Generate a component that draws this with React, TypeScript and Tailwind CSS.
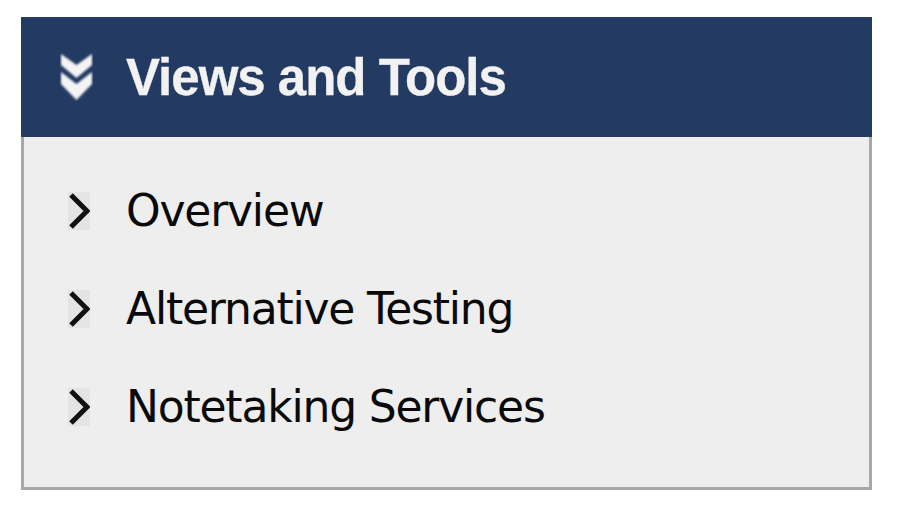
import React from "react";

const links = ["Overview", "Alternative Testing", "Notetaking Services"];

const DoubleChevron = () => (
  <svg width="33" height="50" viewBox="0 0 33 50" className="shrink-0">
    <defs>
      <filter id="soft" x="-20%" y="-20%" width="140%" height="140%">
        <feGaussianBlur stdDeviation="1" />
      </filter>
    </defs>
    <g fill="#f4f4f4" filter="url(#soft)">
      <polygon points="1,2 16.5,13 32,2 32,13 16.5,26 1,13" />
      <polygon points="1,20 16.5,32 32,20 32,32 16.5,48 1,32" />
    </g>
  </svg>
);

const Chevron = () => (
  <span className="flex h-[38px] w-[22px] shrink-0 items-center justify-center bg-[#e4e4e4]">
    <svg width="22" height="38" viewBox="0 0 22 38">
      <path d="M3 3 L19 19 L3 35" fill="none" stroke="#111" strokeWidth="5" />
    </svg>
  </span>
);

export default function App() {
  return (
    <div className="min-h-screen bg-white pl-[21px] pt-[17px]">
      <div className="w-[851px]">
        {/* Header */}
        <div className="flex h-[120px] items-center gap-[33px] bg-[#233a63] pl-[39px]">
          <DoubleChevron />
          <h2
            className="text-[51px] font-bold leading-none tracking-[-1px] text-[#f2f2f2]"
            style={{ fontFamily: '"Liberation Sans", Arial, sans-serif', WebkitTextStroke: "0.3px #f2f2f2" }}
          >
            Views and Tools
          </h2>
        </div>

        {/* Links */}
        <ul className="h-[353px] border-x-[3px] border-b-[3px] border-[#a8a8a8] bg-[#eeeeee] pl-[44px] pt-[25px]">
          {links.map((label) => (
            <li key={label} className="flex h-[98px] items-center gap-[36px]">
              <Chevron />
              <span
                className="text-[44px] leading-none tracking-[-1.2px] text-[#0a0a0a]"
                style={{ fontFamily: '"DejaVu Sans", Verdana, sans-serif' }}
              >
                {label}
              </span>
            </li>
          ))}
        </ul>
      </div>
    </div>
  );
}
